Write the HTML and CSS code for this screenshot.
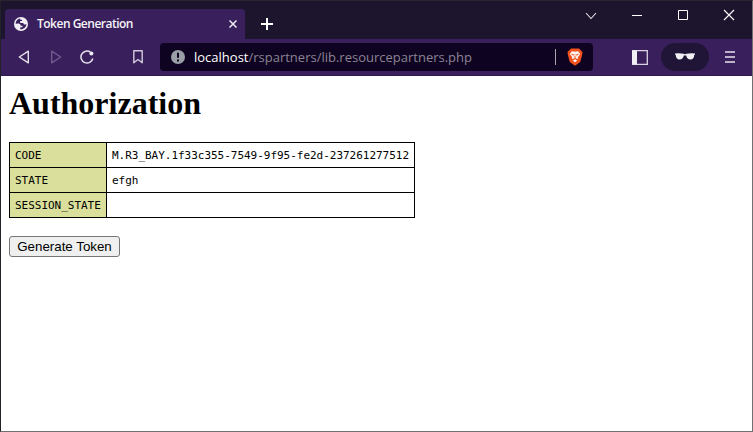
FILE: index.html
```html
<!DOCTYPE html>
<html lang="en">
<head>
<meta charset="utf-8">
<title>Token Generation</title>
<link rel="stylesheet" href="styles.css">
</head>
<body>
<div class="window">
  <header class="tabstrip">
    <div class="tab">
      <svg class="globe" width="14" height="14" viewBox="0 0 14 14"><circle cx="7" cy="7" r="7" fill="#f1eef5"/><path d="M6.2 1.6C3.500 2 1.700 4.200 1.600 6.700L4.600 6.600C6 6.600 6.500 7.600 6.700 8.700H8.500V10.200H6.300V12.300C9.500 12.700 12.400 10.200 12.400 7.100L11.300 7.600C9.900 7.700 9.500 7 9.300 6H6.200V4.100H8V2.800H6.200Z" fill="#3a1f5d"/></svg>
      <span class="tab-title">Token Generation</span>
      <svg class="tab-close" width="8" height="8" viewBox="0 0 8 8"><path d="M.5.5l7 7M7.500.5l-7 7" stroke="#eeeaf3" stroke-width="1.500"/></svg>
    </div>
    <svg class="new-tab" width="12" height="12" viewBox="0 0 12 12"><path d="M0 6h12M6 0v12" stroke="#fff" stroke-width="2"/></svg>
    <div class="controls">
      <svg width="46" height="30" viewBox="0 0 46 30"><path d="M18 12l5 5.500 5-5.500" fill="none" stroke="#e6e4e9" stroke-width="1.100"/></svg>
      <svg width="46" height="30" viewBox="0 0 46 30"><path d="M18 14.500h10" stroke="#fff"/></svg>
      <svg width="46" height="30" viewBox="0 0 46 30"><path d="M18.500 9.500h9v9h-9z" fill="none" stroke="#fff"/></svg>
      <svg width="46" height="30" viewBox="0 0 46 30"><path d="M18 9l10 10M28 9L18 19" stroke="#fff" stroke-width="1.100"/></svg>
    </div>
  </header>
  <nav class="toolbar">
    <svg class="back" width="12" height="14" viewBox="0 0 12 14"><path d="M10.300 1.200v11.600L1.300 7z" fill="none" stroke="#e6e2ec" stroke-width="1.400" stroke-linejoin="round"/></svg>
    <svg class="forward" width="12" height="14" viewBox="0 0 12 14"><path d="M1.700 1.200v11.600l9-5.800z" fill="none" stroke="#6f5b8c" stroke-width="1.400" stroke-linejoin="round"/></svg>
    <svg class="reload" width="14" height="14" viewBox="0 0 14 14"><path d="M12.800 8.500A6 6 0 1 1 10.500 2.200" fill="none" stroke="#e6e2ec" stroke-width="1.500"/><circle cx="11.400" cy="3.600" r="2" fill="#eeeaf3"/></svg>
    <svg class="bookmark" width="10" height="14" viewBox="0 0 10 14"><path d="M.8.800h8.400v12L5 9.500.8 12.800z" fill="none" stroke="#d1cadb" stroke-width="1.400" stroke-linejoin="round"/></svg>
    <div class="address">
      <svg width="14" height="14" viewBox="0 0 14 14"><circle cx="7" cy="7" r="7" fill="#9ba0a7"/><path d="M7 2.800v5M7 9.400v2" stroke="#0e0320" stroke-width="2"/></svg>
      <span class="url"><span class="host">localhost</span>/rspartners/lib.resourcepartners.php</span>
      <span class="divider"></span>
      <svg class="shield" width="16" height="18" viewBox="0 0 16 18"><path d="M4 .5h8L15.500 4 15 7.500 13.200 14 8 17.800 2.800 14 1 7.500.500 4z" fill="#f3521d"/><path d="M5 3.300L8 3.700 11 3.300 13.200 6 10.800 9.300 11 11 8 10 5 11 5.200 9.300 2.800 6z" fill="#fff"/><path d="M5.800 12.400L8 11.300l2.200 1.100L8 14.300z" fill="#fff"/><path d="M4.400 6l2.400.6-.6 1zM11.600 6l-2.400.6.6 1zM8 5.500v4M6.800 8.800L8 9.500l1.200-.7" fill="#f3521d" stroke="#f3521d" stroke-width=".5"/></svg>
    </div>
    <svg class="panel" width="16" height="15" viewBox="0 0 16 15"><path d="M.700.700h14.600v13.600H.700z" fill="none" stroke="#d9d2e2" stroke-width="1.300"/><path d="M0 .5h5v14H0z" fill="#f1eef5"/></svg>
    <div class="glasses">
      <svg width="20" height="8" viewBox="0 0 20 8"><path d="M0 .5Q5 0 8.500.800L10 1.200 11.500.800Q15 0 20 .5V1.600L19.200 2.100C19 5 18 6.600 15.500 6.600C13 6.600 11.800 5 11.200 2.500H8.800C8.200 5 7 6.600 4.500 6.600C2 6.600 1 5 .800 2.100L0 1.600Z" fill="#f1f0f4"/></svg>
    </div>
    <svg class="menu" width="10" height="12" viewBox="0 0 10 12"><path d="M0 1h10M0 6h10M0 11h10" stroke="#bcb1c9" stroke-width="2"/></svg>
  </nav>
  <main class="page">
    <h1>Authorization</h1>
    <table>
      <tr><th>CODE</th><td>M.R3_BAY.1f33c355-7549-9f95-fe2d-237261277512</td></tr>
      <tr><th>STATE</th><td>efgh</td></tr>
      <tr><th>SESSION_STATE</th><td></td></tr>
    </table>
    <button type="button">Generate Token</button>
  </main>
</div>
</body>
</html>
```

FILE: styles.css
```css
* { box-sizing: border-box; }
body { margin: 0; background: #fff; overflow: hidden; }
svg { display: block; flex: none; }
.window {
  width: 753px;
  height: 432px;
  display: flex;
  flex-direction: column;
  border: 1px solid #707072;
  border-top-color: #28252c;
  border-left-color: #242229;
}
.tabstrip {
  height: 38px;
  flex: none;
  display: flex;
  align-items: flex-start;
  background: #1c152d;
  padding-left: 4px;
}
.tab {
  width: 240px;
  height: 30px;
  margin-top: 8px;
  padding: 0 8px 0 9px;
  display: flex;
  align-items: center;
  background: #3a1f5d;
  border-radius: 4px 4px 0 0;
}
.tab-title {
  margin-left: 9px;
  flex: 1;
  color: #f5f3f7;
  font: 600 12px/16px "Open Sans", "Noto Sans", sans-serif;
  letter-spacing: -0.5px;
  white-space: nowrap;
}
.new-tab { margin: 17px 0 0 16px; }
.controls { display: flex; margin-left: auto; }
.toolbar {
  height: 37px;
  flex: none;
  display: flex;
  align-items: center;
  background: #3a1f5d;
  border-bottom: 1px solid #311951;
}
.back { margin-left: 17px; }
.forward { margin-left: 20px; }
.reload { margin-left: 18px; }
.bookmark { margin-left: 39px; }
.address {
  width: 433px;
  height: 28px;
  margin-left: 17px;
  padding: 0 10px 0 11px;
  display: flex;
  align-items: center;
  background: #0e0320;
  border-radius: 4px;
}
.url {
  margin-left: 9px;
  flex: 1;
  color: #8b8495;
  font: 13px/18px "Open Sans", "Noto Sans", sans-serif;
  white-space: nowrap;
}
.host { color: #fff; }
.divider { width: 1px; height: 16px; background: #aaa5b2; }
.shield { margin-left: 11px; }
.panel { margin-left: 39px; }
.glasses {
  width: 48px;
  height: 28px;
  margin-left: 13px;
  display: flex;
  align-items: center;
  justify-content: center;
  background: #211537;
  border-radius: 14px;
}
.menu { margin-left: 16px; }
.page { flex: 1; padding: 8px; background: #fff; }
h1 {
  margin: 0;
  height: 58px;
  color: #000;
  font: bold 32px/39px "Liberation Serif", serif;
}
table {
  width: 406px;
  border-collapse: collapse;
  table-layout: fixed;
  font: 11px/14px "DejaVu Sans Mono", monospace;
  letter-spacing: -0.022px;
  color: #000;
}
th, td {
  height: 25px;
  padding: 2px 5px 0;
  border: 1px solid #000;
  text-align: left;
  font-weight: normal;
  white-space: nowrap;
}
th { width: 97px; background: #dadf9c; }
button {
  display: block;
  width: 111px;
  height: 21px;
  margin-top: 18px;
  padding: 0;
  border: 1px solid #767676;
  border-radius: 3px;
  background: #efefef;
  color: #000;
  font: 13.333px/18px "Liberation Sans", sans-serif;
}
```
